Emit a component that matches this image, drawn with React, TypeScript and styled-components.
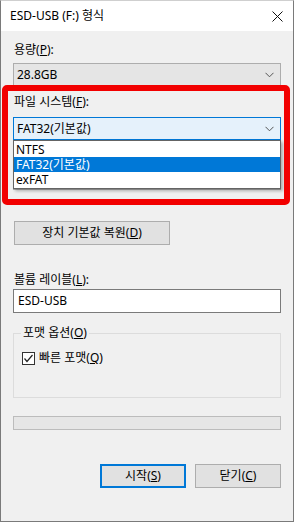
import React from "react";
import styled, { createGlobalStyle } from "styled-components";

const Global = createGlobalStyle`
  html, body {
    margin: 0;
    padding: 0;
    background: #ffffff;
  }
  body {
    font-family: "Noto Sans", "Noto Sans CJK KR", sans-serif;
    font-size: 12px;
    color: #000;
  }
`;

const Window = styled.div`
  width: 294px;
  height: 522px;
  box-sizing: border-box;
  border: 1px solid #7a7a7a;
  border-top-color: #cfcfcf;
  display: flex;
  flex-direction: column;
  background: #f0f0f0;
`;

const TitleBar = styled.div`
  height: 30px;
  flex: none;
  background: #fff;
  display: flex;
  align-items: center;
  justify-content: space-between;
  padding: 0 10px 0 9px;
  font-size: 12px;
  line-height: 16px;
`;

const Body = styled.div`
  flex: 1;
  display: flex;
  flex-direction: column;
  padding: 0 12px 0 12px;
`;

const Label = styled.div<{ $top: number }>`
  margin-top: ${(p) => p.$top}px;
  line-height: 16px;
  height: 16px;
  padding-left: 1px;
  white-space: nowrap;
`;

const Combo = styled.div<{ $focus?: boolean; $top: number }>`
  margin-top: ${(p) => p.$top}px;
  height: 23px;
  box-sizing: border-box;
  border: 1px solid ${(p) => (p.$focus ? "#0078d7" : "#adadad")};
  background: ${(p) => (p.$focus ? "#e5f1fb" : "#e5e5e5")};
  display: flex;
  align-items: center;
  justify-content: space-between;
  padding: 0 6px 0 3px;
  line-height: 16px;
`;

const FsSection = styled.div`
  position: relative;
  display: flex;
  flex-direction: column;
`;

/* the hidden allocation-size row sitting under the open list */
const HiddenSpacer = styled.div`
  height: 16px;
  margin-top: 5px;
`;

const RedFrame = styled.div`
  position: absolute;
  left: -11px;
  right: -9px;
  top: -1px;
  height: 120px;
  border: 6px solid #f20000;
  border-radius: 5px;
  box-sizing: border-box;
  pointer-events: none;
`;

const DropList = styled.div`
  position: absolute;
  left: 0;
  right: 0;
  top: 54px;
  border: 1px solid #646464;
  background: #fff;
  box-shadow: 2px 2px 3px rgba(0, 0, 0, 0.28);
  display: flex;
  flex-direction: column;
  padding: 1px 0;
`;

const DropItem = styled.div<{ $sel?: boolean }>`
  height: 15px;
  display: flex;
  align-items: center;
  padding-left: 2px;
  overflow: hidden;
  background: ${(p) => (p.$sel ? "#0078d7" : "transparent")};
  color: ${(p) => (p.$sel ? "#fff" : "#000")};

  span {
    line-height: 13px;
  }
`;

const Button = styled.button<{ $default?: boolean; $w: number }>`
  width: ${(p) => p.$w}px;
  height: 24px;
  box-sizing: border-box;
  border: ${(p) => (p.$default ? "2px solid #0078d7" : "1px solid #adadad")};
  background: #e1e1e1;
  font: inherit;
  color: #000;
  padding: 0;
  line-height: 16px;
  cursor: default;
`;

const RestoreRow = styled.div`
  margin-top: 31px;
  padding-left: 1px;
`;

const TextInput = styled.div`
  margin-top: 1px;
  height: 24px;
  box-sizing: border-box;
  border: 1px solid #7a7a7a;
  background: #fff;
  padding: 0 4px;
  line-height: 22px;
`;

const Group = styled.fieldset`
  margin: 12px 0 0 0;
  height: 73px;
  box-sizing: border-box;
  border: 1px solid #dcdcdc;
  padding: 9px 8px 0 8px;
  min-width: 0;
`;

const Legend = styled.legend`
  padding: 0 2px;
  margin-left: -1px;
  line-height: 16px;
  font-size: 12px;
`;

const CheckRow = styled.label`
  display: flex;
  align-items: center;
  gap: 4px;
  line-height: 16px;
`;

const CheckBox = styled.span`
  width: 13px;
  height: 13px;
  box-sizing: border-box;
  border: 1px solid #333;
  background: #fff;
  display: inline-flex;
  align-items: center;
  justify-content: center;
`;

const Progress = styled.div`
  margin-top: 18px;
  height: 14px;
  box-sizing: border-box;
  border: 1px solid #bcbcbc;
  background: #e6e6e6;
`;

const ButtonRow = styled.div`
  margin-top: 34px;
  display: flex;
  justify-content: flex-end;
  gap: 9px;
`;

const Chevron = () => (
  <svg width="9" height="6" viewBox="0 0 9 6">
    <polyline points="0.5,0.8 4.5,4.8 8.5,0.8" fill="none" stroke="#555" strokeWidth="1" />
  </svg>
);

const CloseIcon = () => (
  <svg width="11" height="11" viewBox="0 0 11 11">
    <path d="M0.5 0.5 L10.5 10.5 M10.5 0.5 L0.5 10.5" stroke="#111" strokeWidth="1" />
  </svg>
);

export default function App() {
  return (
    <>
      <Global />
      <Window>
        <TitleBar>
          <span>ESD-USB (F:) 형식</span>
          <CloseIcon />
        </TitleBar>
        <Body>
          <Label $top={11}>
            용량(<u>P</u>):
          </Label>
          <Combo $top={5}>
            <span>28.8GB</span>
            <Chevron />
          </Combo>

          <FsSection>
            <Label $top={8}>
              파일 시스템(<u>F</u>):
            </Label>
            <Combo $focus $top={7}>
              <span>FAT32(기본값)</span>
              <Chevron />
            </Combo>
            <HiddenSpacer />
            <Combo $top={6} />
            <DropList>
              <DropItem>
                <span>NTFS</span>
              </DropItem>
              <DropItem $sel>
                <span>FAT32(기본값)</span>
              </DropItem>
              <DropItem>
                <span>exFAT</span>
              </DropItem>
            </DropList>
            <RedFrame />
          </FsSection>

          <RestoreRow>
            <Button $w={156}>
              장치 기본값 복원(<u>D</u>)
            </Button>
          </RestoreRow>

          <Label $top={27}>
            볼륨 레이블(<u>L</u>):
          </Label>
          <TextInput>ESD-USB</TextInput>

          <Group>
            <Legend>
              포맷 옵션(<u>O</u>)
            </Legend>
            <CheckRow>
              <CheckBox>
                <svg width="11" height="11" viewBox="0 0 11 11">
                  <polyline points="1.5,5.5 4,8.5 9.5,2" fill="none" stroke="#222" strokeWidth="1.2" />
                </svg>
              </CheckBox>
              <span>
                빠른 포맷(<u>Q</u>)
              </span>
            </CheckRow>
          </Group>

          <Progress />

          <ButtonRow>
            <Button $default $w={86}>
              시작(<u>S</u>)
            </Button>
            <Button $w={86}>
              닫기(<u>C</u>)
            </Button>
          </ButtonRow>
        </Body>
      </Window>
    </>
  );
}
